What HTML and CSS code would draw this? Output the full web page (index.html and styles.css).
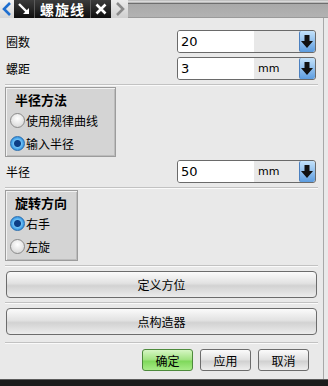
FILE: index.html
```html
<!DOCTYPE html>
<html lang="zh-CN">

<head>
    <meta charset="UTF-8">
    <title>螺旋线</title>
    <link rel="stylesheet" href="styles.css">
</head>

<body>
    <div class="topbar">
        <div class="tb-nav">
            <svg width="10" height="14" viewBox="0 0 10 14"><path d="M8 1 L2 7 L8 13" fill="none" stroke="#1f6fd0" stroke-width="2.6"/></svg>
        </div>
        <div class="tb-tabs">
            <div class="tb-cell tb-icon">
                <svg width="14" height="14" viewBox="0 0 14 14"><path d="M2 2 L10 10" stroke="#fff" stroke-width="2.4"/><path d="M6 12 L12 12 L12 6 Z" fill="#fff"/></svg>
            </div>
            <div class="tb-cell tb-title">螺旋线</div>
            <div class="tb-cell tb-close">
                <svg width="12" height="12" viewBox="0 0 12 12"><path d="M1.5 1.5 L10.5 10.5 M10.5 1.5 L1.5 10.5" stroke="#fff" stroke-width="2.6"/></svg>
            </div>
        </div>
        <div class="tb-nav tb-next">
            <svg width="10" height="14" viewBox="0 0 10 14"><path d="M2 1 L8 7 L2 13" fill="none" stroke="#8a8a8a" stroke-width="2.6"/></svg>
        </div>
        <div class="tb-rest"></div>
    </div>

    <div class="panel">
        <div class="field first">
            <span class="label">圈数</span>
            <div class="combo">
                <span class="value">20</span>
                <span class="unit"></span>
                <span class="drop"><svg width="12" height="14" viewBox="0 0 12 14"><path d="M3.5 0 H8.5 V6 H12 L6 13 L0 6 H3.5 Z" fill="#111"/></svg></span>
            </div>
        </div>
        <div class="field">
            <span class="label">螺距</span>
            <div class="combo">
                <span class="value">3</span>
                <span class="unit">mm</span>
                <span class="drop"><svg width="12" height="14" viewBox="0 0 12 14"><path d="M3.5 0 H8.5 V6 H12 L6 13 L0 6 H3.5 Z" fill="#111"/></svg></span>
            </div>
        </div>

        <div class="sep"></div>

        <div class="group g-radius">
            <div class="group-title">半径方法</div>
            <div class="radio"><span class="dot"></span>使用规律曲线</div>
            <div class="radio"><span class="dot on"></span>输入半径</div>
        </div>

        <div class="field mid">
            <span class="label">半径</span>
            <div class="combo">
                <span class="value">50</span>
                <span class="unit">mm</span>
                <span class="drop"><svg width="12" height="14" viewBox="0 0 12 14"><path d="M3.5 0 H8.5 V6 H12 L6 13 L0 6 H3.5 Z" fill="#111"/></svg></span>
            </div>
        </div>

        <div class="sep"></div>

        <div class="group g-turn">
            <div class="group-title">旋转方向</div>
            <div class="radio"><span class="dot on"></span>右手</div>
            <div class="radio"><span class="dot"></span>左旋</div>
        </div>

        <div class="sep"></div>
        <button class="wide">定义方位</button>
        <div class="sep"></div>
        <button class="wide">点构造器</button>
        <div class="sep sep-low"></div>

        <div class="actions">
            <button class="act ok">确定</button>
            <button class="act">应用</button>
            <button class="act">取消</button>
        </div>
    </div>

    <div class="bottombar"></div>
</body>

</html>
```

FILE: styles.css
```css
body {
    margin: 0;
    width: 328px;
    height: 386px;
    overflow: hidden;
    background-color: #e9e9e9;
    font-family: "Noto Sans CJK SC", "Noto Sans", sans-serif;
    font-size: 12px;
    color: #000;
}

.topbar {
    display: flex;
    height: 18px;
}

.tb-nav {
    width: 14px;
    display: flex;
    align-items: center;
    justify-content: center;
    background: linear-gradient(#f4f4f4, #d6d6d6);
}

.tb-next {
    width: 17px;
    background: linear-gradient(#ececec, #cfcfcf);
}

.tb-tabs {
    display: flex;
    background: linear-gradient(#3c3c3c, #0e0e0e);
}

.tb-cell {
    display: flex;
    align-items: center;
    justify-content: center;
    border-right: 1px solid #5a5a5a;
}

.tb-icon {
    width: 20px;
}

.tb-title {
    width: 55px;
    color: #fff;
    font-weight: bold;
    font-size: 14px;
    letter-spacing: 1px;
}

.tb-close {
    width: 20px;
    border-right: none;
}

.tb-rest {
    flex: 1;
    background: linear-gradient(#c2c2c2 0, #c2c2c2 1px, #dadada 1px, #dadada 2px, #bababa 2px, #bababa 3px, #6e6e6e 3px, #6e6e6e 4px, #a9a9a9 4px, #b2b2b2 100%);
    border-bottom: 1px solid #9a9a9a;
}

.panel {
    width: 324px;
    height: 361px;
    box-sizing: border-box;
    padding: 12px 0 0 5px;
    border-right: 1px solid #a8a8a8;
}

.field {
    display: flex;
    align-items: center;
    justify-content: space-between;
    width: 311px;
    height: 23px;
    margin-top: 4px;
}

.field.first {
    margin-top: 0;
}

.field.mid {
    margin-top: 3px;
}

.label {
    padding-left: 1px;
}

.combo {
    display: flex;
    width: 139px;
    height: 23px;
    box-sizing: border-box;
    border: 1px solid #6a6a6a;
    border-radius: 3px;
    background-color: #e8e8e8;
    overflow: hidden;
}

.value {
    width: 77px;
    background-color: #fff;
    padding-left: 3px;
    font-family: "DejaVu Sans", sans-serif;
    font-size: 13px;
    line-height: 21px;
}

.unit {
    width: 43px;
    padding-left: 4px;
    font-family: "DejaVu Sans", sans-serif;
    font-size: 11px;
    line-height: 22px;
}

.drop {
    width: 16px;
    display: flex;
    align-items: center;
    justify-content: center;
    background: linear-gradient(#c4e2fa, #5d9de0);
    border-left: 1px solid #4a7fbf;
    border-radius: 2px;
}

.sep {
    width: 313px;
    height: 1px;
    margin-top: 4px;
    background-color: #c2c2c2;
    border-bottom: 1px solid #fafafa;
}

.sep-low {
    margin-top: 7px;
}

.group {
    margin-top: 1px;
    box-sizing: border-box;
    background-color: #d4d4d4;
    border: 1px solid #9c9c9c;
    box-shadow: inset 1px 1px 0 #f2f2f2, inset -1px -1px 0 #bcbcbc;
    padding: 2px 0 0 4px;
}

.g-radius {
    width: 111px;
    height: 70px;
}

.g-turn {
    width: 73px;
    height: 71px;
}

.group-title {
    font-weight: bold;
    font-size: 13px;
    padding-left: 5px;
    height: 19px;
    line-height: 19px;
}

.radio {
    display: flex;
    align-items: center;
    height: 23px;
}

.dot {
    width: 15px;
    height: 15px;
    border-radius: 50%;
    border: 1px solid #8a8a8a;
    background: radial-gradient(circle at 50% 35%, #ffffff, #d0d0d0);
    margin-right: 1px;
    box-sizing: border-box;
    flex-shrink: 0;
}

.dot.on {
    border-color: #2a6fb0;
    background: radial-gradient(circle, #0d3e86 0, #0d3e86 3px, #6fc0f4 4px, #2d8ee0 7px);
}

button {
    font-family: "Noto Sans CJK SC", "Noto Sans", sans-serif;
    font-size: 12px;
    color: #000;
    cursor: pointer;
}

.wide {
    display: block;
    width: 311px;
    height: 27px;
    margin: 4px 0 3px 1px;
    border: 1px solid #6c6c6c;
    border-radius: 4px;
    background: linear-gradient(#fbfbfb, #e2e2e2 45%, #d2d2d2 55%, #ececec);
}

.actions {
    display: flex;
    gap: 7px;
    margin: 5px 0 0 137px;
}

.act {
    width: 51px;
    height: 22px;
    padding: 0;
    border: 1px solid #6c6c6c;
    border-radius: 3px;
    background: linear-gradient(#fbfbfb, #e0e0e0 50%, #d0d0d0 55%, #eeeeee);
}

.act.ok {
    border-color: #4d8a3c;
    background: linear-gradient(#d6f6c4, #9fe27f 50%, #7ed85a 55%, #a8ec88);
}

.bottombar {
    height: 7px;
    background-color: #1c1c1c;
    border-top: 1px solid #5c5c5c;
}
```
